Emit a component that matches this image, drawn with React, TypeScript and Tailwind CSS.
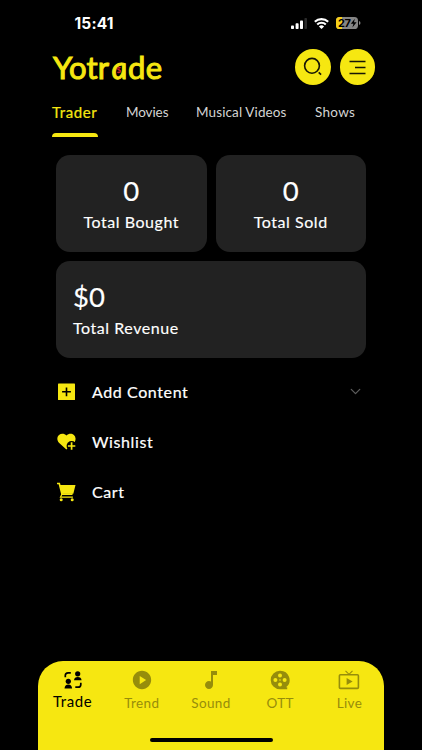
import type { ReactNode } from "react";
import { MdMusicNote, MdPlayCircle } from "react-icons/md";
import { ChevronDown } from "lucide-react";

const tabs = [
    { name: "Trader", className: "w-[74px] text-[15px] text-[#f6e711] tracking-[0.6px] [-webkit-text-stroke:0.2px_#f6e711]" },
    { name: "Movies", className: "w-[70px] text-[13.5px] text-[#d4d4d4] tracking-[-0.1px]" },
    { name: "Musical Videos", className: "w-[119px] text-[13.5px] text-[#d4d4d4] tracking-[0.12px]" },
    { name: "Shows", className: "text-[13.5px] text-[#d4d4d4] tracking-[0.3px]" },
];

function StatusBar() {
    return (
        <div className="flex h-[46px] items-center justify-between pl-[74.5px] pr-[61px]">
            <span className="pt-px font-[Inter] text-[15.5px] font-bold leading-none tracking-[0.15px] text-white">15:41</span>
            <div className="flex items-center gap-[7px]">
                <svg width="18" height="11" viewBox="0 0 18 11" fill="#fff">
                    <rect x="2" y="7.4" width="3" height="3.6" rx="0.8" />
                    <rect x="6.6" y="5.2" width="3" height="5.8" rx="0.8" />
                    <rect x="11" y="2.6" width="3" height="8.4" rx="0.8" />
                    <rect x="15.4" y="0" width="2.6" height="11" rx="0.8" fill="#2b2b2b" />
                </svg>
                <svg width="15" height="11" viewBox="0 0 15 11" fill="none" stroke="#fff" strokeWidth="2.1">
                    <path d="M.8 3.8a9.6 9.6 0 0 1 13.4 0" />
                    <path d="M3.2 6.5a6.2 6.2 0 0 1 8.6 0" />
                    <path d="M7.5 11 4.9 8.4a3.8 3.8 0 0 1 5.2 0Z" fill="#fff" stroke="none" />
                </svg>
                <svg width="25" height="12" viewBox="0 0 25 12">
                    <rect width="22" height="12" rx="3.6" fill="#858585" />
                    <path d="M6 0H3.6A3.6 3.6 0 0 0 0 3.6v4.8A3.6 3.6 0 0 0 3.6 12H6Z" fill="#f7cf18" />
                    <path d="M23 4q1.5.5 1.5 2T23 8Z" fill="#858585" />
                    <text x="2" y="10" fontFamily="Inter" fontSize="11" fontWeight="700" textLength="13">27</text>
                    <path d="m18.8 1.8-4 5h2.6l-1 3.7 4.2-5.2H18Z" />
                </svg>
            </div>
        </div>
    );
}

function Logo() {
    return (
        <div className="relative flex h-9 w-[110px] items-center text-[31px] leading-none text-[#f6e711] [-webkit-text-stroke:1px_#f6e711]">
            <span className="w-[57px] tracking-[0.1px]">Yotr</span>
            <span className="flex w-[18px] skew-x-[7deg] justify-center italic">a</span>
            <span className="w-[35px] tracking-[0.3px]">de</span>
            <span className="absolute left-[63.5px] top-[17px] text-[8px] font-black text-[#c9202f] [-webkit-text-stroke:0px]">$</span>
        </div>
    );
}

function Header() {
    return (
        <header className="flex h-[42px] items-center pl-[53px] pr-[47px]">
            <Logo />
            <div className="ml-auto flex gap-[9px]">
                <button className="flex size-[35.5px] items-center justify-center rounded-full bg-[#f6e711]">
                    <svg width="20" height="20" viewBox="0 0 20 20" fill="none" stroke="#171606" strokeWidth="1.6">
                        <circle cx="9" cy="8.8" r="7.4" />
                        <path d="m15.7 15.4 2.4 2.3" />
                    </svg>
                </button>
                <button className="flex size-[35.5px] items-center justify-center rounded-full bg-[#f6e711]">
                    <svg width="17" height="15" viewBox="0 0 17 15" stroke="#171606" strokeWidth="1.5">
                        <path d="M.5 1.5h16M6 7.5h10.5M.5 13.5h16" />
                    </svg>
                </button>
            </div>
        </header>
    );
}

function StatCard({ value, label, className }: { value: string; label: string; className: string }) {
    return (
        <div className={`flex h-[96.5px] flex-col rounded-[14px] bg-[#222] pt-[19px] text-white [-webkit-text-stroke:0.15px_#fff] ${className}`}>
            <span className="text-[27.5px] leading-[34px]">{value}</span>
            <span className="mt-[2px] text-[16px] leading-6 tracking-[0.55px]">{label}</span>
        </div>
    );
}

function MenuRow({ icon, label, children }: { icon: ReactNode; label: string; children?: ReactNode }) {
    return (
        <div className="flex h-[50px] items-center pl-[56px] pr-[58px]">
            <span className="flex w-[36px] items-center">{icon}</span>
            <span className="text-[16px] tracking-[0.6px] text-white [-webkit-text-stroke:0.2px_#fff]">{label}</span>
            {children}
        </div>
    );
}

function AddIcon() {
    return (
        <svg width="21" height="20" viewBox="0 0 21 20">
            <rect x="2" y="1.6" width="17" height="16.4" rx="0.6" fill="#f6e711" />
            <path d="M10.5 5.4v8.8M6.1 9.8h8.8" stroke="#000" strokeWidth="1.6" />
        </svg>
    );
}

function HeartPlus() {
    return (
        <svg width="21" height="20" viewBox="0 0 21 20">
            <path d="M10.4 17.6 3.2 11C.6 8.2 1 4.8 3 3c2.2-2 5.6-1.6 7.4.6 2-2.2 5.4-2.6 7.5-.6 2 1.9 2.2 4.8.8 7.1Z" fill="#f6e711" />
            <circle cx="15.6" cy="14" r="5" />
            <path d="M15.6 10.3v7.4M11.9 14h7.4" stroke="#f6e711" strokeWidth="1.7" />
        </svg>
    );
}

function CartIcon() {
    return (
        <svg width="20" height="20" viewBox="0 0 20 20">
            <path d="M1 1.5h2.3L6 12.2h10.5" fill="none" stroke="#f6e711" strokeWidth="1.7" />
            <path d="M3.8 3h15.7l-2.2 8.8H6Z" fill="#f6e711" />
            <path d="m6 12-1.5 3.2h12.4" fill="none" stroke="#f6e711" strokeWidth="1.2" />
            <circle cx="5.2" cy="17.7" r="1.5" fill="#f6e711" />
            <circle cx="16.2" cy="17.7" r="1.5" fill="#f6e711" />
        </svg>
    );
}

function TradeIcon() {
    return (
        <svg width="18" height="18" viewBox="0 0 18 18" fill="currentColor">
            <circle cx="13.7" cy="2.8" r="2.6" />
            <path d="M10 9.2q.4-3.2 3.8-3.2t3.8 3.2Z" />
            <circle cx="4.3" cy="10.3" r="2.6" />
            <path d="M.5 17.4q.4-3.8 3.8-3.8t3.8 3.8Z" />
            <path d="M1.3 6.2V4.6a2.8 2.8 0 0 1 2.8-2.8h2.7M16.8 11.8v1.6a2.8 2.8 0 0 1-2.8 2.8h-2.7" fill="none" stroke="currentColor" strokeWidth="1.7" />
        </svg>
    );
}

function ReelIcon() {
    return (
        <svg width="20" height="20" viewBox="0 0 20 20" fill="currentColor">
            <path d="M10 .7a9.3 9.3 0 1 0 0 18.6h7.2v-2H16A9.3 9.3 0 0 0 10 .7Z" />
            <g fill="#f6e711">
                <circle cx="10" cy="5.4" r="2" />
                <circle cx="5.4" cy="10" r="2" />
                <circle cx="14.6" cy="10" r="2" />
                <circle cx="10" cy="14.6" r="2" />
                <circle cx="10" cy="10" r="0.8" />
            </g>
        </svg>
    );
}

function LiveIcon() {
    return (
        <svg width="22" height="20" viewBox="0 0 22 20" fill="none" stroke="currentColor" strokeWidth="1.6">
            <rect x="1.4" y="4.8" width="19" height="13.6" rx="1" />
            <path d="m7.5.8 3.5 3.5L14.5.8" strokeWidth="1.1" />
            <path d="M8.6 7.9v7.2l6-3.6Z" fill="currentColor" stroke="none" />
        </svg>
    );
}

const navigation = [
    { name: "Trend", icon: <MdPlayCircle size={22} /> },
    { name: "Sound", icon: <MdMusicNote size={24} /> },
    { name: "OTT", icon: <ReelIcon /> },
    { name: "Live", icon: <LiveIcon /> },
];

function App() {
    return (
        <div className="flex h-[750px] w-[422px] flex-col overflow-hidden bg-black font-[Lato,sans-serif]">
            <StatusBar />
            <Header />
            <nav className="flex h-[49px] items-start pl-[52px] pt-[13px]">
                {tabs.map((tab, index) => (
                    <div key={tab.name} className={`whitespace-nowrap leading-[22px] ${tab.className}`}>
                        {tab.name}
                        {index === 0 && <div className="mt-[9.5px] h-[4.5px] w-[46px] rounded-t-[4px] bg-[#f6e711]" />}
                    </div>
                ))}
            </nav>

            <main className="flex-1">
                <div className="mx-[56px] mt-[18px] grid grid-cols-2 gap-x-[9px] gap-y-[9.5px]">
                    <StatCard value="0" label="Total Bought" className="items-center" />
                    <StatCard value="0" label="Total Sold" className="items-center" />
                    <StatCard value="$0" label="Total Revenue" className="col-span-2 pl-[17px]" />
                </div>
                <div className="mt-[9px]">
                    <MenuRow icon={<AddIcon />} label="Add Content">
                        <ChevronDown className="ml-auto text-[#5d5d5d]" size={17} strokeWidth={1.8} />
                    </MenuRow>
                    <MenuRow icon={<HeartPlus />} label="Wishlist" />
                    <MenuRow icon={<CartIcon />} label="Cart" />
                </div>
            </main>

            <footer className="mx-[38px] flex h-[89.5px] flex-col rounded-t-[25px] bg-[#f6e711]">
                <div className="grid grid-cols-5">
                    <div className="flex flex-col items-center pt-[10px] text-black">
                        <TradeIcon />
                        <span className="mt-px text-[15px] leading-[22px] tracking-[0.6px]">Trade</span>
                    </div>
                    {navigation.map((item) => (
                        <div key={item.name} className="flex flex-col items-center pt-2 text-[#968d0b]">
                            <span className="flex h-[22px] items-center">{item.icon}</span>
                            <span className="mt-[2px] text-[13.5px] leading-[21px] tracking-[0.35px]">{item.name}</span>
                        </div>
                    ))}
                </div>
                <div className="mx-auto mb-2 mt-auto h-[4px] w-[123px] rounded-full bg-black" />
            </footer>
        </div>
    );
}

export default App;
